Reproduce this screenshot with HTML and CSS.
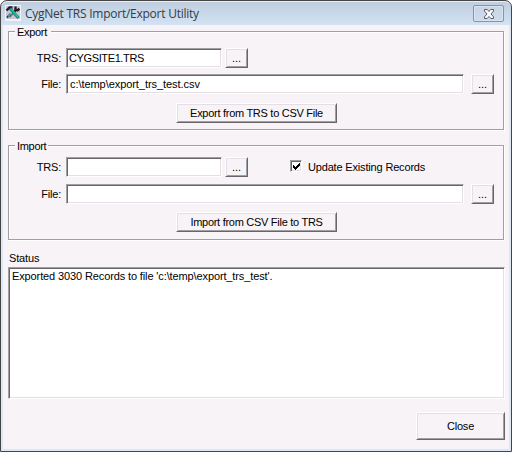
FILE: index.html
```html
<!DOCTYPE html>
<html lang="en">
<head>
<meta charset="utf-8">
<title>CygNet TRS Import/Export Utility</title>
<link rel="stylesheet" href="styles.css">
</head>
<body>
<main class="window">
  <header class="titlebar">
    <svg class="app-icon" width="16" height="16" viewBox="0 0 16 16">
      <path fill="#f4f2f5" d="M0 0h16v16H0z"/><path fill="#cbc5d6" d="M1 1h14v13H1z"/>
      <path fill="none" stroke="#77747e" stroke-width="2" d="M4.500 12l5-5"/>
      <path fill="none" stroke="#1d1d22" stroke-width="2.400" d="M1.500 5.500l3-3 3 0M9 7l3-3M10.500 1.500v3l2 .8 2-1.500"/>
      <path fill="none" stroke="#303038" stroke-width="1.800" d="M2 12.500l3.500-3.500"/>
      <path fill="none" stroke="#0f8f7e" stroke-width="3" d="M5 3.500l8.500 9.500"/>
      <path fill="none" stroke="#2cbfa6" stroke-width="1.200" d="M6 4l7 8M3 11.500l3-3"/>
    </svg>
    <h1 class="title"><span>CygNet TRS Import/Export Utility</span></h1>
    <button class="close-x" aria-label="Close window">
      <svg width="12" height="10" viewBox="0 0 12 10"><path d="M1.500.5h2.700L6 2.500 7.800.5h2.700v1.600L8 5l2.500 2.900v1.600H7.800L6 7.500 4.200 9.500H1.500V7.900L4 5 1.500 2.100z" fill="#fafafa" stroke="#555c70"/></svg>
    </button>
  </header>
  <section class="client">
    <fieldset class="group export">
      <legend><span class="t-legend">Export</span></legend>
      <div class="row">
        <label>TRS:</label><div class="field short"><span class="t-site">CYGSITE1.TRS</span></div><button class="btn browse">...</button>
      </div>
      <div class="row">
        <label>File:</label><div class="field long"><span class="t-path">c:\temp\export_trs_test.csv</span></div><button class="btn browse">...</button>
      </div>
      <button class="btn action">Export from TRS to CSV File</button>
    </fieldset>
    <fieldset class="group import">
      <legend><span class="t-legend">Import</span></legend>
      <div class="row">
        <label>TRS:</label><div class="field short"></div><button class="btn browse">...</button>
        <div class="check"><span class="box"><svg width="7" height="7" viewBox="0 0 7 7" shape-rendering="crispEdges"><path d="M0 2h1v1h1v1h1V3h1V2h1V1h1V0h1v3H6v1H5v1H4v1H3v1H2V6H1V5H0z"/></svg></span><span class="t-update">Update Existing Records</span></div>
      </div>
      <div class="row">
        <label>File:</label><div class="field long"></div><button class="btn browse">...</button>
      </div>
      <button class="btn action">Import from CSV File to TRS</button>
    </fieldset>
    <h2 class="status-label">Status</h2>
    <div class="field log"><span class="t-log">Exported 3030 Records to file 'c:\temp\export_trs_test'.</span></div>
    <button class="btn close">Close</button>
  </section>
</main>
</body>
</html>
```
FILE: styles.css
```css
* { box-sizing: border-box; }
body { margin: 0; background: #fff; overflow: hidden; }
.window {
  width: 512px; height: 452px;
  border: 1px solid #454545; border-radius: 7px 7px 0 0;
  background: linear-gradient(#bfcddf, #d3e3f3 24px, #dce8f6 25px);
  padding: 0 2px 2px;
  display: flex; flex-direction: column;
  font: 11px/13px "Liberation Sans", Arial, sans-serif; color: #000;
  box-shadow: inset 0 1px #e9eff7;
}
.titlebar { height: 24px; display: flex; align-items: flex-start; padding: 4px 5px 0 2px; }
.title { margin: 0 auto 0 4px; font: 12px/18px "Open Sans", "Segoe UI", sans-serif; color: #333b48; letter-spacing: -0.25px; white-space: nowrap; }
.close-x {
  width: 31px; height: 17px; padding: 0; border: 1px solid #8492b4; border-radius: 2px;
  background: linear-gradient(#c8d4e4, #cddced); box-shadow: inset 0 0 0 1px #d9e4f0;
  display: flex; align-items: center; justify-content: center;
}
.client { flex: 1; background: #f7f3f7; padding: 6px 4px 0 5px; display: flex; flex-direction: column; }
.group {
  margin: 0; padding: 0; border: 1px solid #a09fa3; box-shadow: 1px 1px #fff, inset 1px 1px #fff;
  position: relative; width: 496px; display: flex; flex-direction: column; min-width: 0;
}
.export { height: 99px; padding-top: 16px; }
.import { height: 95px; margin-top: 15px; padding-top: 11px; }
legend { position: absolute; left: 6px; top: -7px; padding: 0 4px 0 2px; background: #f7f3f7; line-height: 14px; }
.import legend { padding-right: 2px; }
.t-legend { letter-spacing: -0.3px; }
.row { display: flex; height: 20px; margin-bottom: 6px; flex: none; }
.import .row { margin-bottom: 7px; }
.row label { width: 52px; text-align: right; line-height: 20px; margin-right: 5px; letter-spacing: -0.2px; }
.field {
  background: #fff; border: 1px solid; border-color: #a09fa3 #fff #fff #a09fa3;
  box-shadow: inset 1px 1px #69666b, inset -1px -1px #e3dfe5;
  padding: 3px 2px; white-space: nowrap;
}
.t-site { letter-spacing: -0.38px; }
.t-path { margin-left: 1px; letter-spacing: -0.06px; }
.t-update { letter-spacing: -0.17px; }
.t-log { letter-spacing: -0.12px; }
.short { width: 156px; margin-right: 3px; }
.long { width: 398px; margin-right: 7px; }
.btn {
  font: inherit; color: #000; background: #f7f3f7; padding: 0; border: 1px solid;
  border-color: #fff #69666b #69666b #fff; border-radius: 0;
  box-shadow: inset 1px 1px #e3dfe5, inset -1px -1px #a09fa3;
  white-space: nowrap;
}
.browse { width: 23px; height: 20px; }
.action { width: 161px; height: 20px; align-self: flex-start; margin: 3px 0 0 167px; letter-spacing: -0.28px; }
.import .action { margin-top: 1px; }
.check { display: flex; margin-left: 42px; line-height: 20px; }
.box {
  width: 12px; height: 12px; margin: 3px 6px 0 0; background: #fff; border: 1px solid;
  border-color: #a09fa3 #fff #fff #a09fa3; box-shadow: inset 1px 1px #69666b, inset -1px -1px #e3dfe5;
  display: flex; align-items: center; justify-content: center;
}
.status-label { margin: 12px 0 0 1px; font: inherit; height: 15px; letter-spacing: -0.15px; }
.log { width: 497px; height: 132px; padding: 2px 3px; }
.close { width: 89px; height: 28px; align-self: flex-end; margin-top: 13px; letter-spacing: -0.2px; }
```
